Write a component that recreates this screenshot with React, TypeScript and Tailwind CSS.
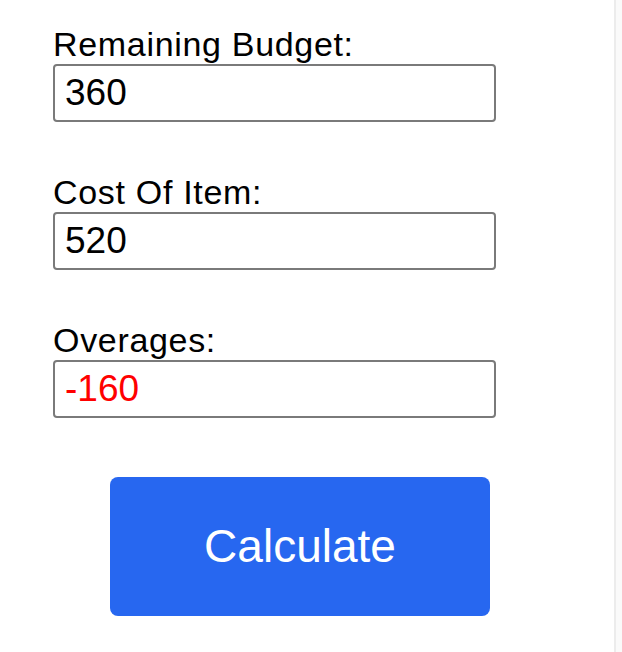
import React, { useState } from 'react';

const font = { fontFamily: '"Liberation Sans", Arial, Helvetica, sans-serif' };

export default function App() {
  const [budget, setBudget] = useState('360');
  const [cost, setCost] = useState('520');
  const [over, setOver] = useState('-160');

  const calc = () => {
    const b = parseFloat(budget) || 0;
    const c = parseFloat(cost) || 0;
    setOver(String(b - c));
  };

  return (
    <div className="flex h-[652px] w-[622px] bg-white" style={font}>
      {/* Main form */}
      <div className="flex w-[614px] flex-col pl-[53px] pt-[26px]">
        <div className="flex flex-col">
          <label className="text-[34px] leading-[36px] tracking-[0.02em] text-black">Remaining Budget:</label>
          <input
            type="text"
            value={budget}
            onChange={e => setBudget(e.target.value)}
            className="mt-[2px] h-[58px] w-[443px] rounded-[4px] border-2 border-[#7a7a7a] bg-white px-[10px] text-[37px] text-black outline-none"
          />
        </div>

        <div className="mt-[52px] flex flex-col">
          <label className="text-[34px] leading-[36px] tracking-[0.02em] text-black">Cost Of Item:</label>
          <input
            type="text"
            value={cost}
            onChange={e => setCost(e.target.value)}
            className="mt-[2px] h-[58px] w-[443px] rounded-[4px] border-2 border-[#7a7a7a] bg-white px-[10px] text-[37px] text-black outline-none"
          />
        </div>

        <div className="mt-[52px] flex flex-col">
          <label className="text-[34px] leading-[36px] tracking-[0.02em] text-black">Overages:</label>
          <input
            type="text"
            value={over}
            readOnly
            className="mt-[2px] h-[58px] w-[443px] rounded-[4px] border-2 border-[#7a7a7a] bg-white px-[10px] text-[37px] text-[#ff0000] outline-none"
          />
        </div>

        <button
          onClick={calc}
          className="ml-[57px] mt-[59px] flex h-[139px] w-[380px] items-center justify-center rounded-[8px] bg-[#2767f0] text-[46px] text-white"
        >
          Calculate
        </button>
      </div>

      {/* Right edge */}
      <div className="w-[2px] bg-[#ececec]" />
      <div className="flex-1 bg-[#fafafa]" />
    </div>
  );
}
